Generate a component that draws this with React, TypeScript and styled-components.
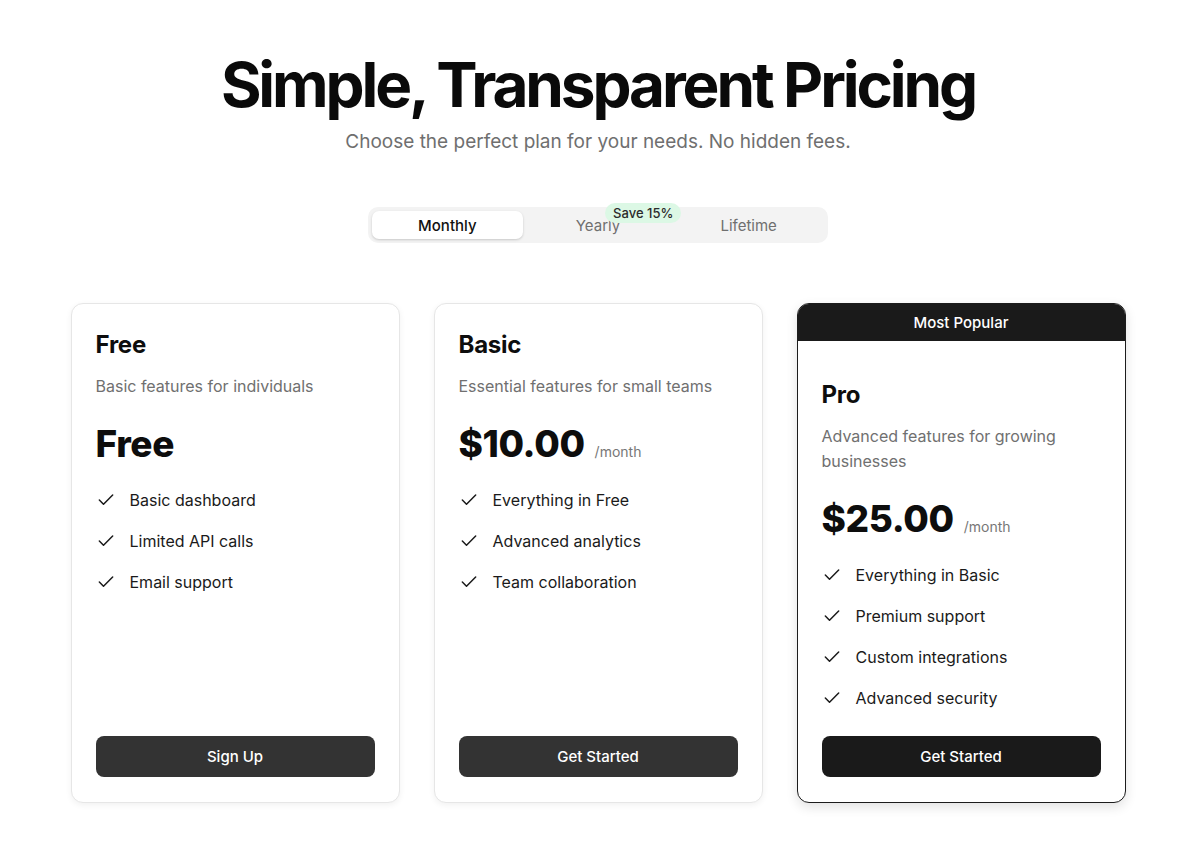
import { useState } from "react";
import styled, { createGlobalStyle } from "styled-components";
import { Check } from "lucide-react";

const GlobalStyle = createGlobalStyle`
  html, body {
    margin: 0;
    padding: 0;
    background: #ffffff;
    font-family: Inter, "Noto Sans", "Liberation Sans", sans-serif;
    color: #111111;
    -webkit-font-smoothing: antialiased;
  }
  * { box-sizing: border-box; }
`;

interface Plan {
  name: string;
  desc: string;
  price: string;
  unit?: string;
  features: string[];
  cta: string;
  popular?: boolean;
}

const plans: Plan[] = [
  {
    name: "Free",
    desc: "Basic features for individuals",
    price: "Free",
    features: ["Basic dashboard", "Limited API calls", "Email support"],
    cta: "Sign Up",
  },
  {
    name: "Basic",
    desc: "Essential features for small teams",
    price: "$10.00",
    unit: "/month",
    features: ["Everything in Free", "Advanced analytics", "Team collaboration"],
    cta: "Get Started",
  },
  {
    name: "Pro",
    desc: "Advanced features for growing businesses",
    price: "$25.00",
    unit: "/month",
    features: [
      "Everything in Basic",
      "Premium support",
      "Custom integrations",
      "Advanced security",
    ],
    cta: "Get Started",
    popular: true,
  },
];

const Page = styled.main`
  padding: 50px 4px 40px 0;
  display: flex;
  flex-direction: column;
  align-items: center;
`;

const Title = styled.h1`
  margin: 0;
  font-size: 62px;
  line-height: 70px;
  font-weight: 700;
  letter-spacing: -0.05em;
  color: #0a0a0a;
`;

const Subtitle = styled.p`
  margin: 8px 0 0;
  font-size: 19px;
  line-height: 28px;
  color: #6f6f6f;
`;

const Toggle = styled.div`
  margin-top: 51px;
  width: 460px;
  height: 36px;
  padding: 4px;
  border-radius: 10px;
  background: #f3f3f3;
  display: grid;
  grid-template-columns: repeat(3, 1fr);
`;

const Tab = styled.button<{ $active?: boolean }>`
  position: relative;
  border: none;
  border-radius: 7px;
  font-family: inherit;
  font-size: 15px;
  font-weight: ${(p) => (p.$active ? 500 : 400)};
  color: ${(p) => (p.$active ? "#111111" : "#6f6f6f")};
  background: ${(p) => (p.$active ? "#ffffff" : "transparent")};
  box-shadow: ${(p) =>
    p.$active ? "0 1px 3px rgba(0,0,0,0.12), 0 1px 2px rgba(0,0,0,0.06)" : "none"};
  cursor: pointer;
  padding: 0;
`;

const SaveBadge = styled.span`
  position: absolute;
  top: -8px;
  right: -8px;
  height: 20px;
  padding: 0 8px;
  border-radius: 10px;
  background: #dcf8e5;
  color: #2b2b2b;
  font-size: 13px;
  font-weight: 500;
  line-height: 20px;
`;

const Grid = styled.section`
  margin-top: 60px;
  display: grid;
  grid-template-columns: repeat(3, 329px);
  gap: 34px;
`;

const Card = styled.article<{ $popular?: boolean }>`
  display: flex;
  flex-direction: column;
  border-radius: 12px;
  border: 1px solid ${(p) => (p.$popular ? "#1c1c1c" : "#e6e6e6")};
  background: #ffffff;
  box-shadow: ${(p) =>
    p.$popular
      ? "0 4px 12px rgba(0,0,0,0.12)"
      : "0 2px 6px rgba(0,0,0,0.06)"};
  overflow: hidden;
`;

const PopularBar = styled.div`
  height: 37px;
  background: #1a1a1a;
  color: #ffffff;
  font-size: 15px;
  font-weight: 500;
  display: flex;
  align-items: center;
  justify-content: center;
`;

const Body = styled.div<{ $top: number }>`
  flex: 1;
  display: flex;
  flex-direction: column;
  padding: ${(p) => p.$top}px 24px 25px;
`;

const PlanName = styled.h2`
  margin: 0;
  font-size: 24px;
  line-height: 32px;
  font-weight: 700;
  letter-spacing: -0.01em;
  color: #0d0d0d;
`;

const PlanDesc = styled.p`
  margin: 13px 0 0;
  font-size: 16px;
  line-height: 25px;
  color: #707070;
`;

const PriceRow = styled.div`
  margin-top: 23px;
  display: flex;
  align-items: baseline;
  gap: 10px;
`;

const Price = styled.span`
  font-size: 37px;
  line-height: 43px;
  font-weight: 800;
  letter-spacing: -0.01em;
  color: #0d0d0d;
`;

const Unit = styled.span`
  font-size: 14px;
  color: #777777;
`;

const Features = styled.ul`
  margin: 23px 0 0;
  padding: 0;
  list-style: none;
  display: flex;
  flex-direction: column;
  gap: 17px;
`;

const Feature = styled.li`
  display: flex;
  align-items: center;
  gap: 14px;
  font-size: 16px;
  line-height: 24px;
  color: #1a1a1a;
  svg {
    flex-shrink: 0;
  }
`;

const Cta = styled.button<{ $dark?: boolean }>`
  margin-top: auto;
  height: 41px;
  width: 100%;
  border: none;
  border-radius: 8px;
  background: ${(p) => (p.$dark ? "#1a1a1a" : "#333333")};
  color: #ffffff;
  font-family: inherit;
  font-size: 15px;
  font-weight: 500;
  cursor: pointer;
`;

const Spacer = styled.div`
  height: 26px;
  flex-shrink: 0;
`;

const tabs = ["Monthly", "Yearly", "Lifetime"];

export default function App() {
  const [period, setPeriod] = useState("Monthly");

  return (
    <>
      <GlobalStyle />
      <Page>
        <Title>Simple, Transparent Pricing</Title>
        <Subtitle>Choose the perfect plan for your needs. No hidden fees.</Subtitle>

        <Toggle>
          {tabs.map((t) => (
            <Tab key={t} $active={period === t} onClick={() => setPeriod(t)}>
              {t}
              {t === "Yearly" && <SaveBadge>Save 15%</SaveBadge>}
            </Tab>
          ))}
        </Toggle>

        <Grid>
          {plans.map((plan) => (
            <Card key={plan.name} $popular={plan.popular}>
              {plan.popular && <PopularBar>Most Popular</PopularBar>}
              <Body $top={plan.popular ? 38 : 25}>
                <PlanName>{plan.name}</PlanName>
                <PlanDesc>{plan.desc}</PlanDesc>
                <PriceRow>
                  <Price>{plan.price}</Price>
                  {plan.unit && <Unit>{plan.unit}</Unit>}
                </PriceRow>
                <Features>
                  {plan.features.map((f) => (
                    <Feature key={f}>
                      <Check size={20} strokeWidth={1.8} color="#1a1a1a" />
                      {f}
                    </Feature>
                  ))}
                </Features>
                <Spacer />
                <Cta $dark={plan.popular}>{plan.cta}</Cta>
              </Body>
            </Card>
          ))}
        </Grid>
      </Page>
    </>
  );
}
